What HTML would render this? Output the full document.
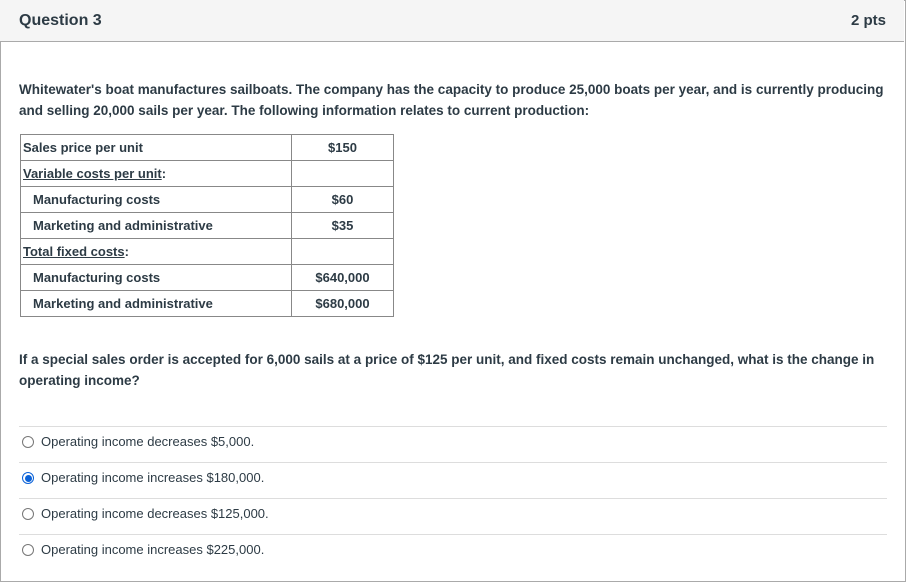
<!DOCTYPE html>
<html><head><style>
body{margin:0;background:#fff;font-family:"Liberation Sans",sans-serif;color:#2d3b45;}
.box{position:absolute;left:0;top:0;width:904px;height:580px;border:1px solid #aaa;}
.hd{position:absolute;left:0;top:0;width:904px;height:41px;background:#f5f5f5;border-bottom:1px solid #aaa;}
.hd .t{position:absolute;left:19px;top:12px;font-size:16px;font-weight:bold;color:#2d3b45;}
.hd .p{position:absolute;right:18px;top:12px;font-size:15px;font-weight:bold;color:#2d3b45;}
.txt{position:absolute;left:19px;font-size:13.5px;font-weight:bold;line-height:21px;color:#2d3b45;}
table{position:absolute;left:20px;top:134px;border-collapse:collapse;font-size:13px;font-weight:bold;table-layout:fixed;width:374px;}
td{border:1px solid #888;height:25px;padding:0 2px;overflow:hidden;white-space:nowrap;}
td.a{width:266px}td.b{text-align:center}
.in{padding-left:12px}
u{text-decoration:underline}
.opt{position:absolute;left:19px;width:868px;height:36px;border-top:1px solid #ddd;font-size:13px;color:#2d3b45;}
.opt span{position:absolute;left:22px;top:7px;}
.r{position:absolute;left:3px;top:9px;width:10px;height:10px;border:1px solid #777;border-radius:50%;}
.r.on{border:1px solid #0b62d8;}
.r.on:after{content:"";position:absolute;left:1.5px;top:1.5px;width:7px;height:7px;border-radius:50%;background:#0b62d8;}
</style></head><body>
<div class="box"></div>
<div class="hd"><div class="t">Question 3</div><div class="p">2 pts</div></div>
<div class="txt" style="top:79px;width:870px">Whitewater's boat manufactures sailboats. The company has the capacity to produce 25,000 boats per year, and is currently producing and selling 20,000 sails per year. The following information relates to current production:</div>
<table>
<tr><td class="a">Sales price per unit</td><td class="b">$150</td></tr>
<tr><td class="a"><u>Variable costs per unit</u>:</td><td class="b"></td></tr>
<tr><td class="a in">Manufacturing costs</td><td class="b">$60</td></tr>
<tr><td class="a in">Marketing and administrative</td><td class="b">$35</td></tr>
<tr><td class="a"><u>Total fixed costs</u>:</td><td class="b"></td></tr>
<tr><td class="a in">Manufacturing costs</td><td class="b">$640,000</td></tr>
<tr><td class="a in">Marketing and administrative</td><td class="b">$680,000</td></tr>
</table>
<div class="txt" style="top:349px;width:860px">If a special sales order is accepted for 6,000 sails at a price of $125 per unit, and fixed costs remain unchanged, what is the change in operating income?</div>
<div class="opt" style="top:426px"><div class="r"></div><span>Operating income decreases $5,000.</span></div>
<div class="opt" style="top:462px"><div class="r on"></div><span>Operating income increases $180,000.</span></div>
<div class="opt" style="top:498px"><div class="r"></div><span>Operating income decreases $125,000.</span></div>
<div class="opt" style="top:534px"><div class="r"></div><span>Operating income increases $225,000.</span></div>
</body></html>
